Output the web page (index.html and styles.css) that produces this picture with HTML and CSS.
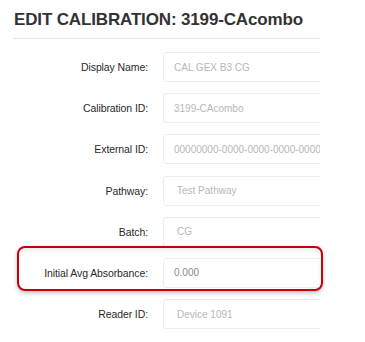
FILE: index.html
```html
<!DOCTYPE html>
<html>
<head>
    <meta charset="UTF-8">
    <meta name="viewport" content="width=device-width, initial-scale=1.0">
    <title>Edit calibration</title>
    <link rel="stylesheet" href="styles.css">
</head>
<body>
    <div class="page">
        <div class="panel">
            <h1 class="title">EDIT CALIBRATION: 3199-CAcombo</h1>
            <form class="cal-form">
                <div class="row">
                    <label class="row-label">Display Name:</label>
                    <div class="field">CAL GEX B3 CG</div>
                </div>
                <div class="row">
                    <label class="row-label">Calibration ID:</label>
                    <div class="field">3199-CAcombo</div>
                </div>
                <div class="row">
                    <label class="row-label">External ID:</label>
                    <div class="field">00000000-0000-0000-0000-000000000000</div>
                </div>
                <div class="row">
                    <label class="row-label">Pathway:</label>
                    <div class="field field-select">Test Pathway</div>
                </div>
                <div class="row">
                    <label class="row-label">Batch:</label>
                    <div class="field field-select">CG</div>
                </div>
                <div class="row">
                    <label class="row-label">Initial Avg Absorbance:</label>
                    <div class="field field-value">0.000</div>
                </div>
                <div class="row">
                    <label class="row-label">Reader ID:</label>
                    <div class="field field-select">Device 1091</div>
                </div>
            </form>
        </div>
        <div class="highlight"></div>
    </div>
</body>
</html>
```

FILE: styles.css
```css
body {
    margin: 0;
    background-color: #FFFFFF;
    font-family: 'Liberation Sans', Arial, sans-serif;
    color: #333333;
}
.page {
    position: relative;
    width: 365px;
    height: 342px;
    overflow: hidden;
}
.panel {
    width: 307px;
    margin-left: 13px;
    overflow: hidden;
}
.title {
    margin: 0;
    padding: 10px 0 8px 1px;
    font-size: 17px;
    letter-spacing: -0.15px;
    font-weight: bold;
    color: #333333;
    line-height: 20px;
    border-bottom: 1px solid #e6e6e6;
}
.cal-form {
    display: flex;
    flex-direction: column;
    gap: 11.2px;
    padding-top: 13px;
}
.row {
    display: flex;
    align-items: center;
    gap: 15px;
}
.row-label {
    width: 135px;
    flex-shrink: 0;
    text-align: right;
    font-size: 10.5px;
    letter-spacing: -0.1px;
    color: #2a2a2a;
}
.field {
    flex-shrink: 0;
    width: 220px;
    height: 30px;
    box-sizing: border-box;
    padding: 0 10px;
    border: 1px solid #ececec;
    border-radius: 3px;
    display: flex;
    align-items: center;
    font-size: 10px;
    color: #b4b7bb;
    white-space: nowrap;
    overflow: hidden;
}
.field-select {
    padding-left: 13px;
}
.field-value {
    color: #8a8a8a;
}
.highlight {
    position: absolute;
    left: 17px;
    top: 246px;
    width: 306px;
    height: 45px;
    box-sizing: border-box;
    border: 2px solid #c4000b;
    border-radius: 8px;
    box-shadow: 0 2px 4px rgba(0,0,0,0.25), inset 0 3px 4px rgba(0,0,0,0.07);
}
```
